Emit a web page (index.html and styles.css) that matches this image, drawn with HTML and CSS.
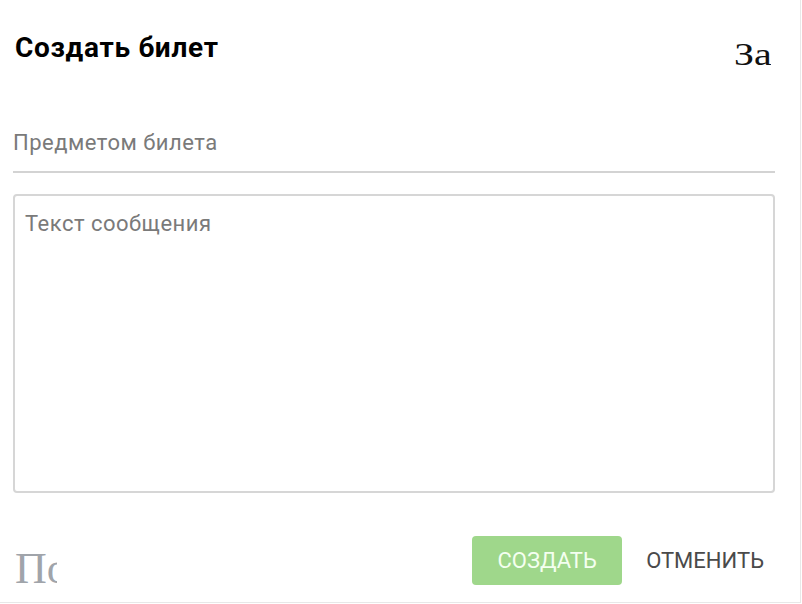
FILE: index.html
```html
<!DOCTYPE html>
<html lang="ru">
<head>
<meta charset="utf-8">
<link rel="stylesheet" href="styles.css">
</head>
<body>
<div class="dialog">
  <div class="header">
    <h1 class="title">Создать билет</h1>
    <div class="close-alt"><span class="alt-text">Закрыть</span></div>
  </div>
  <div class="subject">Предметом билета</div>
  <div class="message">Текст сообщения</div>
  <div class="footer">
    <div class="attach-alt">Поле</div>
    <div class="actions">
      <button class="btn btn-create">Создать</button>
      <button class="btn btn-cancel">Отменить</button>
    </div>
  </div>
</div>
</body>
</html>
```
FILE: styles.css
```css
html, body {
  margin: 0;
  padding: 0;
  background: #fff;
}
.dialog {
  box-sizing: border-box;
  width: 801px;
  height: 603px;
  border-right: 1px solid #e8e8e8;
  border-bottom: 1px solid #e8e8e8;
  padding: 0 25px 0 13px;
  display: flex;
  flex-direction: column;
  font-family: Roboto, "Noto Sans", sans-serif;
}
.header {
  display: flex;
  justify-content: space-between;
  align-items: flex-start;
  height: 101px;
  padding-top: 30px;
  box-sizing: border-box;
}
.title {
  margin: 0 0 0 2px;
  font-size: 28px;
  font-weight: 700;
  letter-spacing: 0.7px;
  color: #000;
  line-height: 36px;
}
.close-alt {
  width: 37px;
  overflow: hidden;
  white-space: nowrap;
  font-family: "Liberation Serif", serif;
  font-size: 32px;
  line-height: 40px;
  color: #111;
  margin-top: 4px;
  margin-right: 4px;
}
.alt-text {
  display: inline-block;
  transform: scaleX(1.25);
  transform-origin: left center;
}
.subject {
  height: 72px;
  box-sizing: border-box;
  padding-top: 29px;
  border-bottom: 2px solid #d3d3d3;
  font-size: 22px;
  letter-spacing: 0.5px;
  color: #7a7a7a;
  line-height: 26px;
  margin-bottom: 21px;
}
.message {
  height: 299px;
  box-sizing: border-box;
  border: 2px solid #d6d6d6;
  border-radius: 4px;
  padding: 15px 10px;
  font-size: 22px;
  letter-spacing: 0.5px;
  line-height: 26px;
  color: #7a7a7a;
}
.footer {
  display: flex;
  justify-content: space-between;
  align-items: flex-start;
  margin-top: 43px;
}
.attach-alt {
  width: 42px;
  overflow: hidden;
  white-space: nowrap;
  font-family: "Liberation Serif", serif;
  font-size: 44px;
  line-height: 50px;
  color: #a0a4aa;
  margin-left: 2px;
  margin-top: 8px;
}
.actions {
  display: flex;
  gap: 8px;
  align-items: center;
}
.btn {
  font-family: Roboto, "Noto Sans", sans-serif;
  font-size: 22px;
  text-transform: uppercase;
  border: none;
  border-radius: 4px;
  height: 49px;
  padding: 0 24px;
  cursor: pointer;
}
.btn-create {
  background: #9fd78b;
  color: #f4fff0;
  width: 150px;
  padding: 0;
}
.btn-cancel {
  background: transparent;
  color: #4a4a4a;
  padding: 0 11px 0 16px;
}
```
